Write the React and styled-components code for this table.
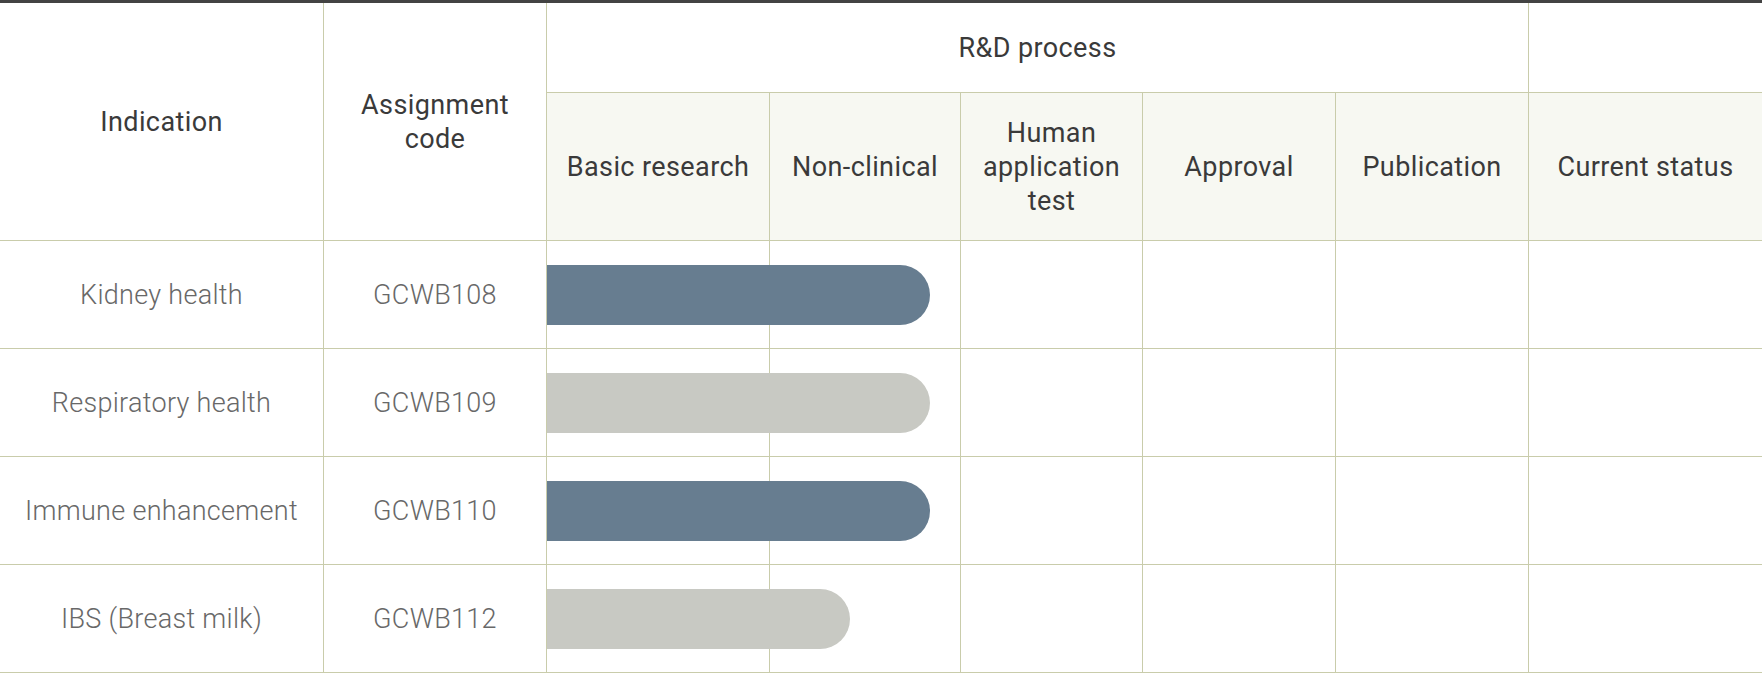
import React from "react";
import styled, { createGlobalStyle } from "styled-components";

const GlobalStyle = createGlobalStyle`
  html, body { margin: 0; padding: 0; background: #ffffff; }
  * { box-sizing: border-box; }
  body { font-family: Roboto, "Liberation Sans", Arial, sans-serif; }
`;

const COLS = "324px 223px 223px 191px 182px 193px 193px 1fr";
const LINE = "#c9ccab";

const Table = styled.div`
  width: 1762px;
  border-top: 3px solid #434343;
`;

const HeadGrid = styled.div`
  display: grid;
  grid-template-columns: ${COLS};
  grid-template-rows: 90px 148px;
`;

const HeadCell = styled.div`
  grid-column: ${(p) => p.$col};
  grid-row: ${(p) => p.$row};
  display: flex;
  align-items: center;
  justify-content: center;
  text-align: center;
  padding: 0 16px;
  font-size: 27px;
  font-weight: 400;
  letter-spacing: 0.4px;
  line-height: 34px;
  color: #3a3a3a;
  background: ${(p) => (p.$shade ? "#f7f8f2" : "#ffffff")};
  border-bottom: 1px solid ${LINE};
  border-right: ${(p) => (p.$last ? "none" : `1px solid ${LINE}`)};
`;

const BodyRow = styled.div`
  display: grid;
  grid-template-columns: ${COLS};
  height: 108px;
`;

const Cell = styled.div`
  grid-column: ${(p) => p.$col};
  grid-row: 1;
  display: flex;
  align-items: center;
  justify-content: center;
  text-align: center;
  font-size: 27px;
  font-weight: 300;
  letter-spacing: 0.3px;
  color: #686868;
  border-bottom: 1px solid ${LINE};
  border-right: ${(p) => (p.$last ? "none" : `1px solid ${LINE}`)};
`;

const Bar = styled.div`
  grid-column: 3 / -1;
  grid-row: 1;
  align-self: center;
  justify-self: start;
  height: 60px;
  margin-top: -1px;
  border-radius: 0 30px 30px 0;
  background: ${(p) => (p.$tone === "dark" ? "#677d90" : "#c8c9c3")};
  z-index: 1;
`;

const stages = ["Basic research", "Non-clinical", "Human application test", "Approval", "Publication", "Current status"];

const rows = [
  { name: "Kidney health", code: "GCWB108", tone: "dark", width: 383 },
  { name: "Respiratory health", code: "GCWB109", tone: "light", width: 383 },
  { name: "Immune enhancement", code: "GCWB110", tone: "dark", width: 383 },
  { name: "IBS (Breast milk)", code: "GCWB112", tone: "light", width: 303 },
];

export default function App() {
  return (
    <>
      <GlobalStyle />
      <Table>
        <HeadGrid>
          <HeadCell $col="1" $row="1 / 3">Indication</HeadCell>
          <HeadCell $col="2" $row="1 / 3">Assignment code</HeadCell>
          <HeadCell $col="3 / 8" $row="1">R&amp;D process</HeadCell>
          <HeadCell $col="8" $row="1" $last />
          {stages.map((s, i) => (
            <HeadCell key={s} $col={String(i + 3)} $row="2" $shade $last={i === stages.length - 1}>
              {s}
            </HeadCell>
          ))}
        </HeadGrid>
        {rows.map((r) => (
          <BodyRow key={r.code}>
            <Cell $col="1">{r.name}</Cell>
            <Cell $col="2">{r.code}</Cell>
            {[3, 4, 5, 6, 7, 8].map((c) => (
              <Cell key={c} $col={String(c)} $last={c === 8} />
            ))}
            <Bar $tone={r.tone} style={{ width: `${r.width}px` }} />
          </BodyRow>
        ))}
      </Table>
    </>
  );
}
